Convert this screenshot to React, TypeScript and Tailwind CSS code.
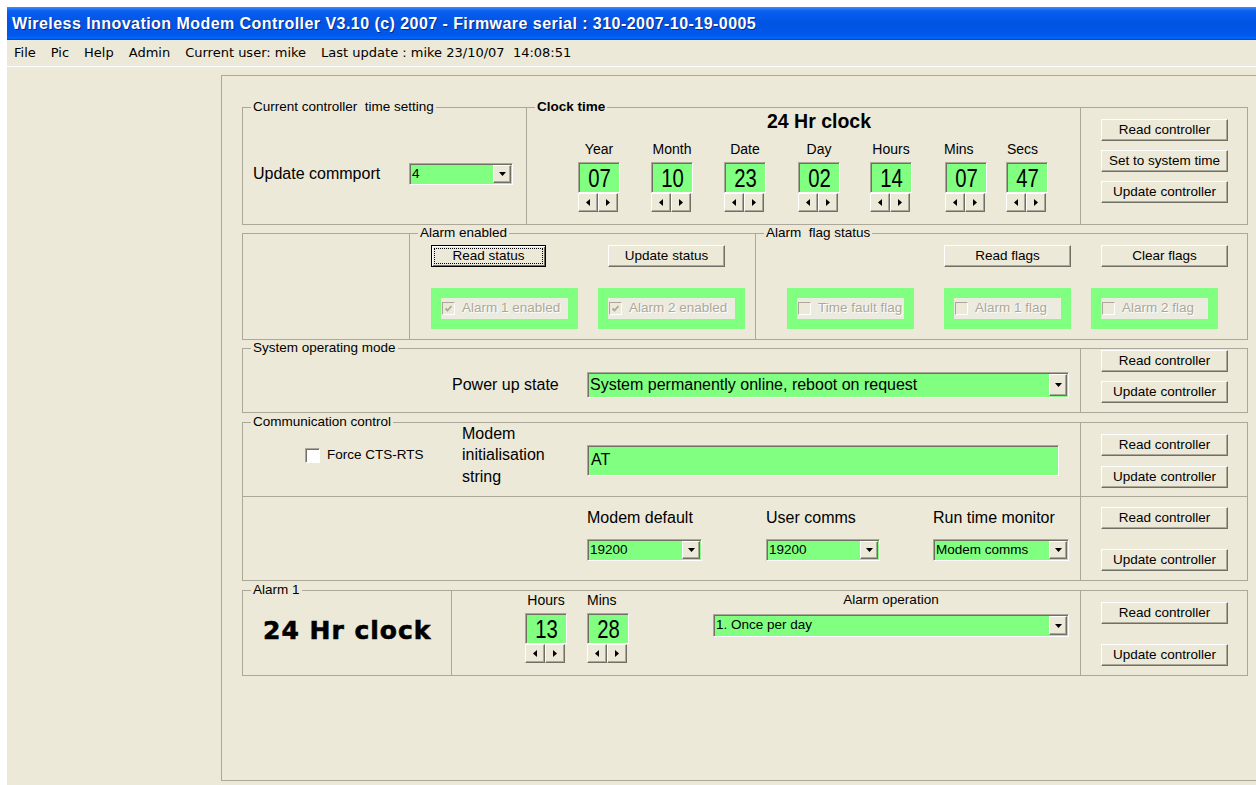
import type { ReactNode } from "react";

// shared XP-style edges
const RAISED =
  "border border-t-white border-l-white border-r-[#716f64] border-b-[#716f64] shadow-[inset_-1px_-1px_0_#aca899] bg-[#ece9d8]";
const SUNKEN =
  "border border-t-[#aca899] border-l-[#aca899] border-r-white border-b-white shadow-[inset_1px_1px_0_#716f64]";
const LINE = "border-[#aca899]";

function Btn({ label, className = "", focused = false }: { label: string; className?: string; focused?: boolean }) {
  if (focused) {
    return (
      <button
        type="button"
        className={`flex h-[22px] items-center justify-center border border-black bg-[#ece9d8] text-[13.5px] shadow-[inset_1px_1px_0_#fff,inset_-1px_-1px_0_#716f64] ${className}`}
      >
        <span className="border border-dotted border-black px-[17px] leading-[14px]">{label}</span>
      </button>
    );
  }
  return (
    <button type="button" className={`flex h-[22px] items-center justify-center text-[13.5px] ${RAISED} ${className}`}>
      {label}
    </button>
  );
}

function DownArrow() {
  return (
    <svg width="7" height="4" viewBox="0 0 7 4">
      <polygon points="0,0 7,0 3.5,4" fill="#000" />
    </svg>
  );
}

function Combo({ value, className = "", text = "text-[13.5px]" }: { value: string; className?: string; text?: string }) {
  return (
    <div className={`flex ${SUNKEN} bg-[#80ff80] ${className}`}>
      <div className={`flex flex-1 items-center overflow-hidden whitespace-nowrap pl-[2px] ${text}`}>{value}</div>
      <div className={`m-[1px] flex w-[18px] items-center justify-center ${RAISED}`}>
        <DownArrow />
      </div>
    </div>
  );
}

function SpinBtn({ dir }: { dir: "left" | "right" }) {
  return (
    <div className={`flex h-[19px] w-[20px] items-center justify-center ${RAISED}`}>
      <svg width="4" height="7" viewBox="0 0 4 7">
        <polygon points={dir === "left" ? "4,0 4,7 0,3.5" : "0,0 0,7 4,3.5"} fill="#000" />
      </svg>
    </div>
  );
}

function Spinner({
  label,
  value,
  className = "",
  labelCls = "text-center",
}: {
  label: string;
  value: string;
  className?: string;
  labelCls?: string;
}) {
  return (
    <div className={`flex w-[42px] shrink-0 flex-col items-start ${className}`}>
      <div className={`w-full whitespace-nowrap text-[14px] leading-[16px] ${labelCls}`}>{label}</div>
      <div className={`mt-[5px] flex h-[31px] w-[42px] items-center justify-center bg-[#80ff80] ${SUNKEN}`}>
        <span className="inline-block scale-x-[0.78] text-[26px] leading-none">{value}</span>
      </div>
      <div className="flex">
        <SpinBtn dir="left" />
        <SpinBtn dir="right" />
      </div>
    </div>
  );
}

// disabled checkbox sitting in a green frame
function FlagBox({ label, checked, className = "" }: { label: string; checked?: boolean; className?: string }) {
  return (
    <div className={`h-[41px] bg-[#80ff80] p-[10px] ${className}`}>
      <div className="flex h-[21px] items-center bg-[#ecebdf] pl-[1px]">
        <div className="flex h-[13px] w-[13px] items-center justify-center border border-t-[#aca899] border-l-[#aca899] border-r-white border-b-white bg-[#ece9d8]">
          {checked && (
            <svg width="9" height="9" viewBox="0 0 9 9">
              <polyline points="1.5,4.5 3.5,6.5 7.5,2" fill="none" stroke="#aca899" strokeWidth="1.8" />
            </svg>
          )}
        </div>
        <span className="ml-[7px] whitespace-nowrap text-[13.5px] text-[#aca899] [text-shadow:1px_1px_0_#fff]">{label}</span>
      </div>
    </div>
  );
}

function Group({
  title,
  bold = false,
  className = "",
  children,
}: {
  title: string;
  bold?: boolean;
  className?: string;
  children?: ReactNode;
}) {
  return (
    <fieldset className={`shrink-0 border ${LINE} ${className}`}>
      <legend className={`ml-[8px] whitespace-pre px-[2px] text-[13.5px] leading-[16px] ${bold ? "font-bold" : ""}`}>
        {title}
      </legend>
      {children}
    </fieldset>
  );
}

function ButtonBox({ labels, className = "" }: { labels: string[]; className?: string }) {
  return (
    <div className={`flex w-[168px] shrink-0 flex-col items-start border ${LINE} pl-[20px] ${className}`}>
      {labels.map((l) => (
        <Btn key={l} label={l} className="w-[127px]" />
      ))}
    </div>
  );
}

const clockFields = [
  { label: "Year", value: "07", cls: "", labelCls: "text-center" },
  { label: "Month", value: "10", cls: "ml-[31px]", labelCls: "text-center" },
  { label: "Date", value: "23", cls: "ml-[31px]", labelCls: "text-center" },
  { label: "Day", value: "02", cls: "ml-[32px]", labelCls: "text-center" },
  { label: "Hours", value: "14", cls: "ml-[30px]", labelCls: "text-center" },
  { label: "Mins", value: "07", cls: "ml-[33px]", labelCls: "-ml-[1px] text-left" },
  { label: "Secs", value: "47", cls: "ml-[19px]", labelCls: "pl-[1px] text-left" },
];

function TitleBar() {
  return (
    <div className="flex h-[33px] shrink-0 items-center bg-[linear-gradient(to_bottom,#3d8ef7_0%,#0a5ef0_12%,#0054e3_50%,#0058ec_85%,#0066ff_95%,#0042cc_100%)] pl-[5px]">
      <span className="whitespace-nowrap text-[16px] font-bold tracking-[0.45px] text-white [text-shadow:1px_1px_0_#0a2a8c]">
        Wireless Innovation Modem Controller V3.10 (c) 2007 - Firmware serial : 310-2007-10-19-0005
      </span>
    </div>
  );
}

function MenuBar() {
  const items = ["File", "Pic", "Help", "Admin", "Current user: mike", "Last update : mike 23/10/07  14:08:51"];
  return (
    <div className="flex h-[27px] shrink-0 items-center gap-[15px] border-b border-white pl-[7px] font-['DejaVu_Sans',sans-serif] text-[13px]">
      {items.map((i) => (
        <span key={i} className="whitespace-pre">
          {i}
        </span>
      ))}
    </div>
  );
}

function Panel() {
  return (
    <div className={`h-[706px] w-[1035px] shrink-0 border-t border-l border-b ${LINE} pl-[20px] pt-[23px]`}>
      <div className="flex w-[1006px] flex-col">
        {/* controller clock */}
        <div className="flex h-[126px]">
          <Group title="Current controller  time setting" className="h-[126px] w-[285px]">
            <div className="mt-[47px] flex items-center pl-[10px]">
              <span className="w-[156px] text-[16px]">Update commport</span>
              <Combo value="4" className="h-[22px] w-[104px]" />
            </div>
          </Group>
          <Group title="Clock time" bold className="h-[126px] w-[553px] border-l-0 border-r-0">
            <div className="-mt-[4px] ml-[240px] text-[19.5px] font-bold leading-[20px]">24 Hr clock</div>
            <div className="ml-[51px] mt-[10px] flex">
              {clockFields.map((f) => (
                <Spinner key={f.label} label={f.label} value={f.value} className={f.cls} labelCls={f.labelCls} />
              ))}
            </div>
          </Group>
          <ButtonBox
            labels={["Read controller", "Set to system time", "Update controller"]}
            className="mt-[8px] h-[118px] gap-[9px] pt-[11px]"
          />
        </div>

        {/* alarms */}
        <div className="flex h-[115px]">
          <div className={`mt-[8px] h-[107px] w-[168px] shrink-0 border ${LINE}`} />
          <Group title="Alarm enabled" className="h-[115px] w-[346px] border-l-0">
            <div className="mt-[4px] flex pl-[21px]">
              <Btn label="Read status" focused className="w-[115px]" />
              <Btn label="Update status" className="ml-[62px] w-[117px]" />
            </div>
            <div className="mt-[21px] flex pl-[21px]">
              <FlagBox label="Alarm 1 enabled" checked className="w-[147px]" />
              <FlagBox label="Alarm 2 enabled" checked className="ml-[20px] w-[147px]" />
            </div>
          </Group>
          <Group title="Alarm  flag status" className="h-[115px] w-[492px] border-l-0">
            <div className="mt-[4px] flex pl-[188px]">
              <Btn label="Read flags" className="w-[127px]" />
              <Btn label="Clear flags" className="ml-[30px] w-[127px]" />
            </div>
            <div className="mt-[21px] flex pl-[31px]">
              <FlagBox label="Time fault flag" className="w-[127px]" />
              <FlagBox label="Alarm 1 flag" className="ml-[30px] w-[127px]" />
              <FlagBox label="Alarm 2 flag" className="ml-[20px] w-[127px]" />
            </div>
          </Group>
        </div>

        {/* operating mode */}
        <div className="flex h-[73px]">
          <Group title="System operating mode" className="h-[73px] w-[838px] border-r-0">
            <div className="mt-[16px] flex items-center pl-[209px]">
              <span className="w-[135px] text-[16px]">Power up state</span>
              <Combo
                value="System permanently online, reboot on request"
                text="text-[16px]"
                className="h-[26px] w-[482px]"
              />
            </div>
          </Group>
          <ButtonBox labels={["Read controller", "Update controller"]} className="mt-[8px] h-[65px] gap-[9px] pt-[1px]" />
        </div>

        {/* comms */}
        <div className="mt-[1px] flex h-[83px]">
          <Group title="Communication control" className="h-[83px] w-[838px] border-r-0">
            <div className="-mt-[8px] flex h-[66px] items-center pl-[62px]">
              <div className={`h-[15px] w-[15px] shrink-0 bg-white ${SUNKEN}`} />
              <span className="ml-[7px] w-[135px] text-[13.5px]">Force CTS-RTS</span>
              <span className="w-[125px] text-[16px] leading-[21.5px]">
                Modem
                <br />
                initialisation
                <br />
                string
              </span>
              <div className={`mt-[10px] h-[31px] w-[472px] bg-[#80ff80] pl-[3px] pt-[2px] text-[16px] ${SUNKEN}`}>AT</div>
            </div>
          </Group>
          <ButtonBox labels={["Read controller", "Update controller"]} className="mt-[8px] h-[75px] gap-[10px] pt-[11px]" />
        </div>

        {/* baud rates */}
        <div className="flex h-[84px]">
          <div className={`flex h-[84px] w-[838px] shrink-0 border-l border-b ${LINE} pl-[344px] pt-[11px]`}>
            <div className="flex w-[115px] flex-col">
              <span className="text-[16px] leading-[19px]">Modem default</span>
              <Combo value="19200" className="mt-[12px] h-[22px] w-[115px]" />
            </div>
            <div className="ml-[64px] flex w-[114px] flex-col">
              <span className="text-[16px] leading-[19px]">User comms</span>
              <Combo value="19200" className="mt-[12px] h-[22px] w-[114px]" />
            </div>
            <div className="ml-[53px] flex w-[136px] flex-col">
              <span className="whitespace-nowrap text-[16px] leading-[19px]">Run time monitor</span>
              <Combo value="Modem comms" className="mt-[12px] h-[22px] w-[136px]" />
            </div>
          </div>
          <ButtonBox
            labels={["Read controller", "Update controller"]}
            className="h-[84px] gap-[20px] border-t-0 pt-[10px]"
          />
        </div>

        {/* alarm 1 */}
        <div className="mt-[1px] flex h-[94px]">
          <Group title="Alarm 1" className="h-[94px] w-[209px] border-r-0">
            <div className="mt-[20px] whitespace-nowrap pl-[20px] font-['DejaVu_Sans',sans-serif] text-[25px] font-bold leading-[26px] tracking-[1px] [-webkit-text-stroke:0.6px_#000]">
              24 Hr clock
            </div>
          </Group>
          <div className={`mt-[8px] flex h-[86px] w-[629px] shrink-0 border-t border-l border-b ${LINE} pl-[73px] pt-[1px]`}>
            <Spinner label="Hours" value="13" />
            <Spinner label="Mins" value="28" className="ml-[20px]" labelCls="text-left" />
            <div className="ml-[84px] flex w-[356px] flex-col items-center">
              <span className="text-[13.5px] leading-[16px]">Alarm operation</span>
              <Combo value="1. Once per day" className="mt-[6px] h-[23px] w-[356px]" />
            </div>
          </div>
          <ButtonBox labels={["Read controller", "Update controller"]} className="mt-[8px] h-[86px] gap-[20px] pt-[11px]" />
        </div>
      </div>
    </div>
  );
}

export default function App() {
  return (
    <div className="h-[785px] w-[1256px] overflow-hidden bg-white pl-[7px] pt-[7px] font-['Liberation_Sans',Arial,sans-serif] text-black">
      <div className="flex h-full flex-col bg-[#ece9d8]">
        <TitleBar />
        <MenuBar />
        <div className="flex flex-1 pt-[8px]">
          <div className="w-[214px] shrink-0" />
          <Panel />
        </div>
      </div>
    </div>
  );
}
